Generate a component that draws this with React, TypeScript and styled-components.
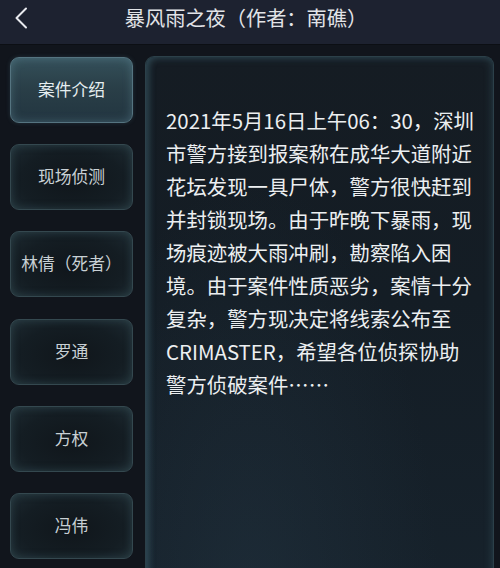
import React from 'react';
import styled, { createGlobalStyle } from 'styled-components';

const GlobalStyle = createGlobalStyle`
  html, body {
    margin: 0;
    padding: 0;
    background: #12161d;
  }
  body {
    font-family: 'Noto Sans CJK SC', 'Noto Sans', sans-serif;
    -webkit-font-smoothing: antialiased;
  }
`;

const Screen = styled.div`
  width: 500px;
  height: 568px;
  overflow: hidden;
  display: flex;
  flex-direction: column;
  background: #11151c;
  color: #e4e8ea;
`;

const Header = styled.header`
  height: 44px;
  flex-shrink: 0;
  display: flex;
  align-items: center;
  position: relative;
  background: #1d2230;
  border-bottom: 1px solid #0c0f14;
`;

const BackButton = styled.button`
  width: 44px;
  height: 44px;
  padding: 0 0 8px 14px;
  display: flex;
  align-items: center;
  background: none;
  border: none;
  color: #e8eaee;
  cursor: pointer;
`;

const Title = styled.h1`
  position: absolute;
  left: 0;
  right: 0;
  top: 0;
  height: 35px;
  margin: 0;
  display: flex;
  align-items: center;
  justify-content: center;
  padding-right: 8px;
  font-size: 20.2px;
  font-weight: 400;
  color: #e2e4e8;
  pointer-events: none;
`;

const Body = styled.div`
  flex: 1;
  display: flex;
  gap: 12px;
  padding: 11px 6px 0 10px;
  min-height: 0;
`;

const Sidebar = styled.nav`
  width: 123px;
  flex-shrink: 0;
  display: flex;
  flex-direction: column;
  gap: 21.2px;
  padding-top: 1px;
`;

const TabButton = styled.button<{ $active?: boolean }>`
  height: 66px;
  flex-shrink: 0;
  border-radius: 9px;
  border: 1px solid ${p => (p.$active ? '#557480' : '#34484f')};
  background: ${p =>
    p.$active
      ? 'linear-gradient(180deg, #34505a 0%, #2a3f48 45%, #223540 100%)'
      : 'radial-gradient(ellipse at 50% 55%, #10161b 0%, #141d23 60%, #1d2a31 100%)'};
  box-shadow: ${p =>
    p.$active
      ? 'inset 0 0 10px rgba(120, 170, 185, 0.35), 0 0 4px rgba(90, 140, 155, 0.25)'
      : 'inset 0 0 8px rgba(80, 120, 130, 0.35)'};
  color: ${p => (p.$active ? '#e6eef0' : '#c8d0d4')};
  font-family: inherit;
  font-size: 16.8px;
  white-space: nowrap;
  padding: 0 0 2px;
  cursor: pointer;
`;

const Panel = styled.section`
  flex: 1;
  height: 560px;
  border-radius: 9px 9px 0 0;
  border: 1px solid #2c4049;
  border-bottom: none;
  background:
    radial-gradient(ellipse at 30% 90%, rgba(40, 60, 75, 0.35) 0%, rgba(0, 0, 0, 0) 55%),
    linear-gradient(180deg, #151c23 0%, #141d25 40%, #17232d 100%);
  box-shadow: inset 0 0 10px rgba(70, 110, 125, 0.45), inset 4px 0 6px rgba(60, 95, 110, 0.35);
  padding: 47px 12px 0 20px;
`;

const Paragraph = styled.div`
  font-size: 20.4px;
  line-height: 33px;
  color: #eceff1;
`;

const Line = styled.div`
  white-space: nowrap;
`;

const tabs = ['案件介绍', '现场侦测', '林倩（死者）', '罗通', '方权', '冯伟'];

const lines = [
  '2021年5月16日上午06：30，深圳',
  '市警方接到报案称在成华大道附近',
  '花坛发现一具尸体，警方很快赶到',
  '并封锁现场。由于昨晚下暴雨，现',
  '场痕迹被大雨冲刷，勘察陷入困',
  '境。由于案件性质恶劣，案情十分',
  '复杂，警方现决定将线索公布至',
  'CRIMASTER，希望各位侦探协助',
  '警方侦破案件……',
];

export default function App() {
  return (
    <>
      <GlobalStyle />
      <Screen>
        <Header>
          <BackButton aria-label="back">
            <svg width="14" height="22" viewBox="0 0 14 22" fill="none">
              <path d="M12 1.5 L2.5 11 L12 20.5" stroke="currentColor" strokeWidth="2" strokeLinecap="round" strokeLinejoin="round" />
            </svg>
          </BackButton>
          <Title>暴风雨之夜（作者：南礁）</Title>
        </Header>
        <Body>
          <Sidebar>
            {tabs.map((t, i) => (
              <TabButton key={t} $active={i === 0}>
                {t}
              </TabButton>
            ))}
          </Sidebar>
          <Panel>
            <Paragraph>
              {lines.map(l => (
                <Line key={l}>{l}</Line>
              ))}
            </Paragraph>
          </Panel>
        </Body>
      </Screen>
    </>
  );
}
